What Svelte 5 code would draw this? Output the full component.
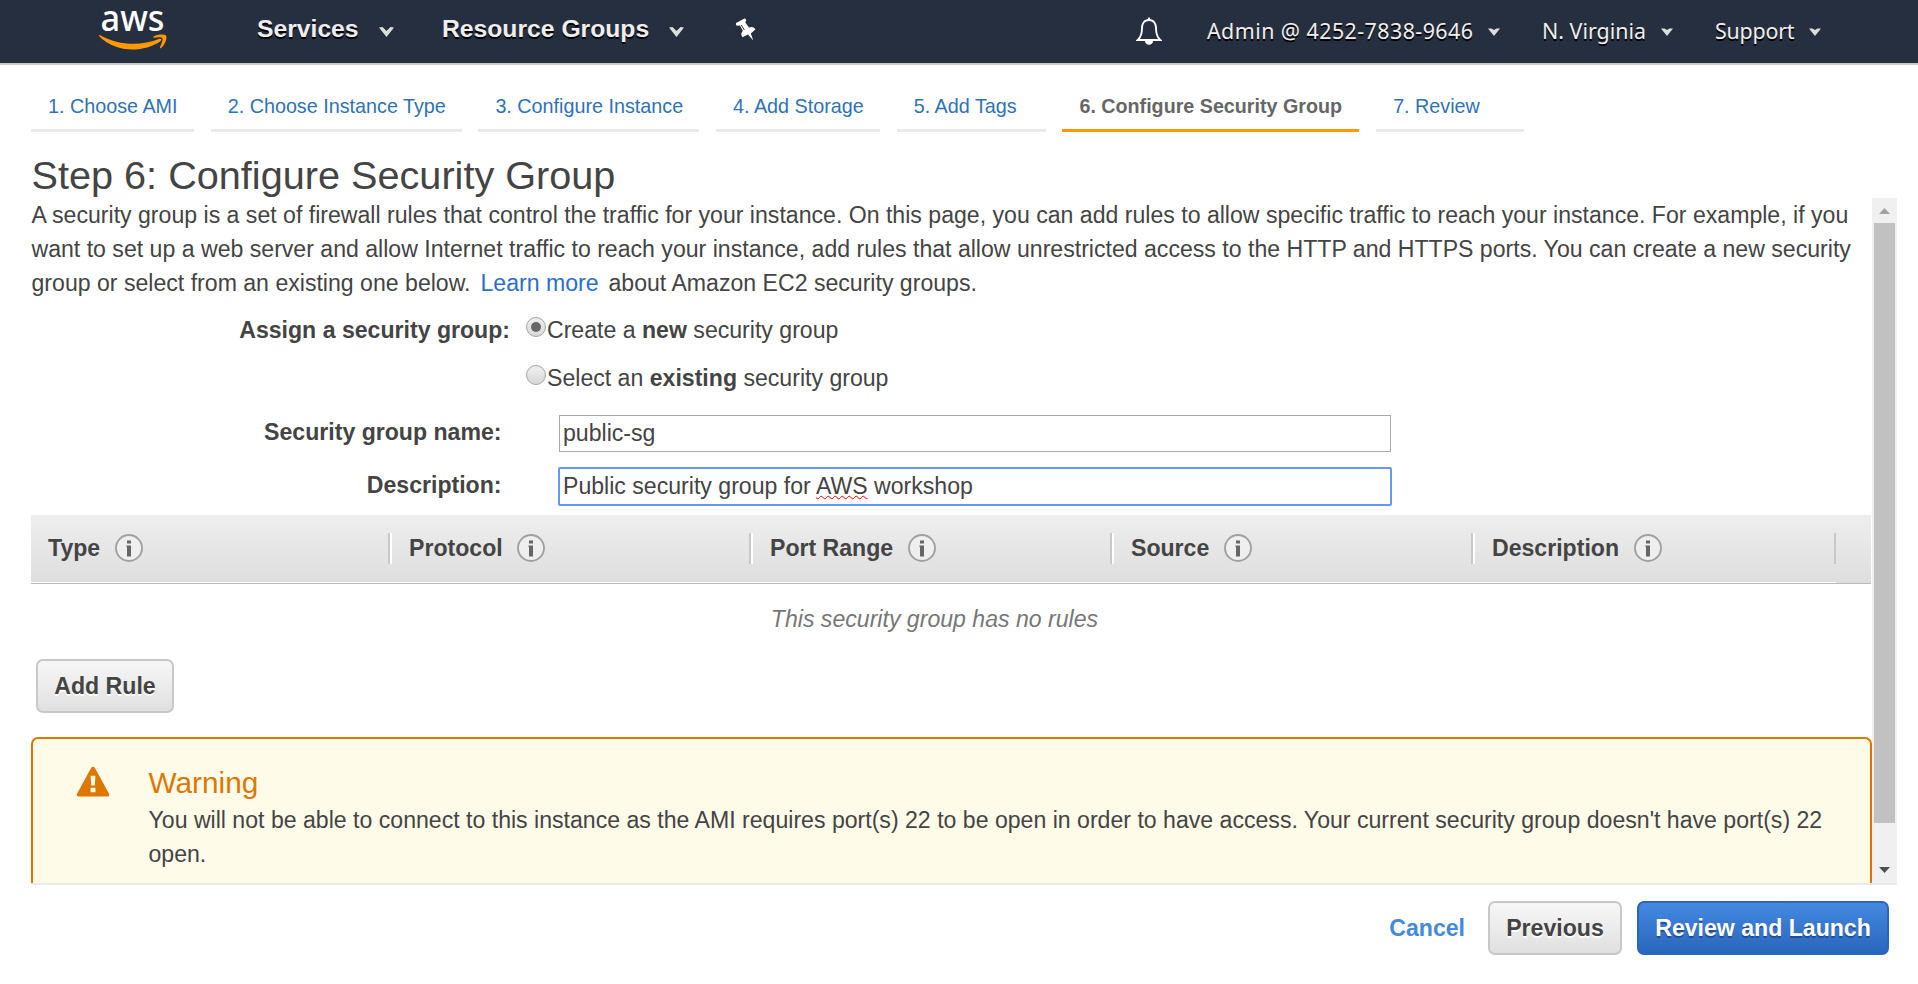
<script>
  const tabs = [
    { label: '1. Choose AMI', w: 163 },
    { label: '2. Choose Instance Type', w: 251 },
    { label: '3. Configure Instance', w: 221 },
    { label: '4. Add Storage', w: 164 },
    { label: '5. Add Tags', w: 149 },
    { label: '6. Configure Security Group', w: 297, active: true },
    { label: '7. Review', w: 148 }
  ];
  const columns = ['Type', 'Protocol', 'Port Range', 'Source', 'Description'];
  const account = [
    { label: 'Admin @ 4252-7838-9646', w: 335, spacing: 0.45 },
    { label: 'N. Virginia', w: 173, spacing: 0 },
    { label: 'Support', w: 120, spacing: -0.2 }
  ];
</script>

<header>
  <svg class="logo" width="72" height="52" viewBox="0 0 72 52">
    <text x="2.500" y="30.500" textLength="64" lengthAdjust="spacingAndGlyphs">aws</text>
    <path d="M1.200 36.300Q0 34.500 2 35.200C21 45.500 42 46.500 61.500 38.800Q64.800 38.600 62.500 41.200C45 53 18 53 1.200 36.300Z" fill="#f90" />
    <path d="M55.500 36.500C60 34 66 34 68 35.400C69.500 38 67 45 62.800 48.200Q61.500 48.500 62 47.200C63.500 43.500 65.300 39.500 64.200 38C63 36.800 59.500 37.200 56.200 37.700Q54.500 37.500 55.500 36.500Z" fill="#f90" />
  </svg>
  <nav>
    <span class="menu services">Services</span>
    <svg class="chev" width="15" height="12" viewBox="0 0 15 12"><path d="M0 1.500L3.500 1L7.500 5L11.500 1L15 1.500L7.500 11Z" /></svg>
    <span class="menu groups">Resource Groups</span>
    <svg class="chev" width="15" height="12" viewBox="0 0 15 12"><path d="M0 1.500L3.500 1L7.500 5L11.500 1L15 1.500L7.500 11Z" /></svg>
    <svg class="pin" width="22" height="24" viewBox="0 0 22 24">
      <path d="M9.500 0.500Q11 0.500 11.300 2.500L10.300 4.500L14 9.500C17 8.300 19.500 9 20.300 11.500L15.800 15.500L18.300 22.500L13 16.500L7.500 19.200C5.700 17.200 6 15 7.800 12.800L5 7.500L2 7.700Q0.300 7 1 5Z" />
      <path d="M6.300 7L9.300 12" stroke="#262f3f" stroke-width="1" fill="none" />
    </svg>
  </nav>
  <div class="account">
    <svg class="bell" width="26" height="29" viewBox="0 0 26 29">
      <path d="M13 3C8 3 6 7 6 11C6 18 4.500 20.500 1.800 23H24.200C21.500 20.500 20 18 20 11C20 7 18 3 13 3Z" fill="none" stroke="#fff" stroke-width="1.900" />
      <path d="M11.500 3L12.300 0.500H13.700L14.500 3M9 24H17C17 29 9 29 9 24Z" fill="#fff" />
    </svg>
    {#each account as a}
      <span class="acct" style="width:{a.w}px;letter-spacing:{a.spacing}px">{a.label}<svg width="12" height="8" viewBox="0 0 12 8"><path d="M0 0.500H3.500L6 2L8.500 0.500H12L6 8Z" /></svg></span>
    {/each}
  </div>
</header>

<ul class="tabs">
  {#each tabs as t}
    <li class:active={t.active} style="width:{t.w}px">{t.label}</li>
  {/each}
</ul>

<h1>Step 6: Configure Security Group</h1>

<main>
  <div class="content">
    <p class="intro">A security group is a set of firewall rules that control the traffic for your instance. On this page, you can add rules to allow specific traffic to reach your instance. For example, if you<br />want to set up a web server and allow Internet traffic to reach your instance, add rules that allow unrestricted access to the HTTP and HTTPS ports. You can create a new security<br />group or select from an existing one below. <a>Learn more</a> about Amazon EC2 security groups.</p>

    <div class="assign">
      <b class="label">Assign a security group:</b>
      <div class="choices">
        <div class="choice"><i class="radio on"></i><span>Create a <b>new</b> security group</span></div>
        <div class="choice"><i class="radio"></i><span>Select an <b>existing</b> security group</span></div>
      </div>
    </div>

    <div class="field"><b class="label">Security group name:</b><div class="input">public-sg</div></div>
    <div class="field second"><b class="label">Description:</b><div class="input focus">Public security group for <span class="typo">AWS</span> workshop</div></div>

    <div class="thead">
      {#each columns as c}
        <div class="th">
          <span>{c}</span>
          <svg width="30" height="30" viewBox="0 0 30 30">
            <circle cx="15" cy="15" r="13" fill="#efefef" stroke="#a0a0a0" stroke-width="1.900" />
            <path d="M13 7.500h4v3h-4zM12.500 12.500h4.500v11h-4v-9.500h-0.500z" fill="#666" />
          </svg>
        </div>
      {/each}
    </div>
    <div class="empty">This security group has no rules</div>
    <button class="btn add">Add Rule</button>

    <section class="warning">
      <svg width="35" height="32" viewBox="0 0 36 33">
        <path d="M15.500 2Q17.500 -0.500 19.500 2L34 28.500Q35 31.500 32 31.500H3Q0 31.500 1 28.500Z" fill="#dd7700" />
        <path d="M15 10h5l-0.700 10h-3.600zM15 22.500h5v4.500h-5z" fill="#fffbe9" />
      </svg>
      <div>
        <h2>Warning</h2>
        <p>You will not be able to connect to this instance as the AMI requires port(s) 22 to be open in order to have access. Your current security group doesn't have port(s) 22<br />open.</p>
      </div>
    </section>
  </div>
  <div class="scrollbar">
    <svg width="25" height="24" viewBox="0 0 25 24"><path d="M7 16H18L12.500 10Z" fill="#a3a3a3" /></svg>
    <div class="thumb"></div>
    <svg width="25" height="24" viewBox="0 0 25 24"><path d="M7 8H18L12.500 14Z" fill="#505050" /></svg>
  </div>
</main>

<footer>
  <a class="cancel">Cancel</a>
  <button class="btn prev">Previous</button>
  <button class="btn primary">Review and Launch</button>
</footer>

<style>
  :global(body) { background: #fff; overflow: hidden; }
  :global(#app) { height: 984px; display: flex; flex-direction: column; color: #444; font: 23.1px/34px "Liberation Sans", Arial, sans-serif; }
  header { box-sizing: border-box; height: 65px; flex: none; background: #262f3f; border-bottom: 2px solid #c9c9ce; display: flex; align-items: flex-start; color: #eee; }
  .logo { margin-left: 98px; overflow: visible; }
  .logo text { font: 500 36px "Noto Sans", sans-serif; fill: #fff; }
  nav { display: flex; padding-left: 87px; width: 879px; }
  .menu { font: bold 24.7px/28px "Liberation Sans", Arial, sans-serif; margin-top: 15px; text-shadow: 0 2px 0 #000; white-space: nowrap; }
  .services { width: 122px; }
  .groups { width: 227px; margin-left: 48px; }
  .chev { margin-top: 26px; fill: #ddd; }
  .pin { margin: 18px 0 0 51px; fill: #fff; }
  .account { display: flex; }
  .bell { margin: 17px 45px 0 0; }
  .acct { font: 21.4px/28px "Noto Sans", sans-serif; margin-top: 17px; text-shadow: 0 2px 0 #000; white-space: nowrap; }
  .acct svg { margin-left: 15px; fill: #ddd; vertical-align: 3px; }
  .tabs { list-style: none; margin: 24px 0 0 31px; padding: 0; display: flex; gap: 16.7px; flex: none; }
  .tabs li { box-sizing: border-box; height: 43px; padding-left: 17px; border-bottom: 3px solid #eaeaea; font-size: 19.75px; line-height: 34px; color: #2e73b8; white-space: nowrap; }
  .tabs .active { border-color: #f90; color: #666; font-weight: bold; font-size: 19.7px; }
  h1 { margin: 21px 0 0 31.5px; font-size: 39.65px; line-height: 44px; font-weight: 400; height: 45px; flex: none; }
  main { display: flex; height: 687px; flex: none; width: 1866px; margin-left: 31px; box-sizing: border-box; border-bottom: 2px solid #eaeaea; }
  .content { width: 1841px; overflow: hidden; white-space: nowrap; }
  p { margin: 0; }
  a { color: #2a6fcb; }
  .intro { padding-left: 0.5px; }
  .intro a { margin: 0 3.5px; }
  .assign { display: flex; margin-top: 12px; }
  .assign .label { width: 479px; text-align: right; margin-right: 16px; padding-top: 1px; }
  .choices { display: flex; flex-direction: column; gap: 14px; }
  .choice { display: flex; }
  .choice span { padding-top: 1px; margin-bottom: -1px; }
  .radio { box-sizing: border-box; width: 20px; height: 20px; margin: 5px 1px 0 0; border: 1px solid #a6a6a6; border-radius: 50%; background: linear-gradient(#eee, #d8d8d8); display: grid; place-items: center; }
  .radio.on::after { content: ""; width: 10px; height: 10px; border-radius: 50%; background: #666; }
  .field { display: flex; height: 37px; margin-top: 22px; }
  .assign + .field { margin-top: 21px; }
  .field .label { width: 470.5px; text-align: right; }
  .input { box-sizing: border-box; width: 832px; height: 37px; margin-left: 57.5px; border: 1px solid #a9a9a9; padding-left: 3px; line-height: 35px; }
  .field.second { margin-top: 15px; height: 39px; }
  .second .label { line-height: 36px; }
  .focus { margin-left: 56.5px; width: 834px; border: 2px solid #6499f5; border-radius: 2px; height: 39px; line-height: 35px; }
  .typo { text-decoration: underline wavy #f00 1px; text-underline-offset: 1px; text-decoration-skip-ink: none; }
  .thead { box-sizing: border-box; width: 1840px; height: 69px; margin-top: 9px; display: flex; background: linear-gradient(#eee, #dedede); border-bottom: 1px solid #bbb; }
  .th { box-sizing: border-box; width: 361px; height: 68px; border-bottom: 1px solid #fff; display: flex; align-items: center; gap: 13.5px; padding: 0 0 1px 17px; font-weight: bold; position: relative; }
  .th span { margin-top: -1px; }
  .th::after { content: ""; position: absolute; right: 0; top: 18px; width: 2px; height: 31px; background: #c8c8c8; border-right: 2px solid #fff; }
  .th:nth-child(5)::after { border: 0; }
  .empty { width: 1807px; text-align: center; font-style: italic; color: #777; margin-top: 18px; }
  .btn { box-sizing: border-box; height: 54px; border: 2px solid #c8c8c8; border-radius: 7px; background: linear-gradient(#f7f7f7, #e0e0e0); font: bold 23.1px/34px "Liberation Sans", Arial, sans-serif; color: #444; text-shadow: 0 2px 0 #fff; padding: 0; display: block; }
  .add { width: 138px; margin: 23px 0 0 5px; }
  .warning { box-sizing: border-box; height: 200px; margin-top: 24px; border: 2px solid #d97700; border-radius: 7px; background: #fffbe9; display: flex; padding: 27px 0 0 43px; }
  .warning svg { margin-right: 37.5px; }
  h2 { margin: 0 0 3px; font-size: 29.8px; line-height: 34px; font-weight: 400; color: #dd7700; }
  .scrollbar { width: 25px; background: #f0f0f0; display: flex; flex-direction: column; }
  .scrollbar svg:last-child { margin-top: auto; }
  .thumb { width: 21px; height: 600px; margin: 1px auto 0; background: #c1c1c1; }
  footer { display: flex; justify-content: flex-end; align-items: center; padding: 16px 29px 0 0; }
  .cancel { color: #4489e0; font-weight: bold; margin-right: 23px; }
  .prev { width: 134px; margin-right: 15px; }
  .primary { width: 252px; color: #fff; border-color: #2a66bd; background: linear-gradient(#4489e0, #2a66bd); text-shadow: 0 2px 0 #1f4f97; }
</style>
